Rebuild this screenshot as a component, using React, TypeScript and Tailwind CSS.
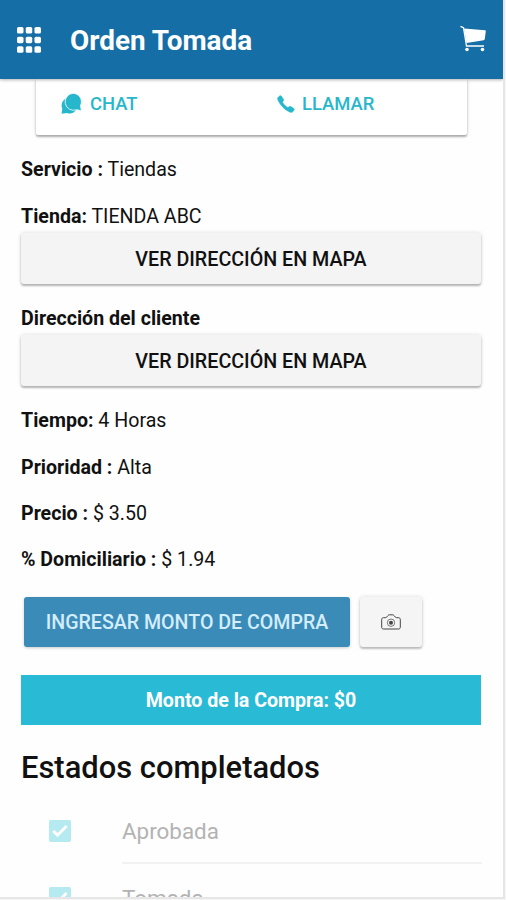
import { IoIosCall } from "react-icons/io";

interface FieldPropTypes {
  label: string;
  value?: string;
  className?: string;
}

function Field({ label, value, className = "" }: FieldPropTypes) {
  return (
    <p className={`h-6 text-[19.6px] leading-[26px] whitespace-nowrap ${className}`}>
      <span className="font-bold">{label}</span>
      {value && <span> {value}</span>}
    </p>
  );
}

function MapButton() {
  return (
    <button className="mt-[5px] h-[51px] w-[460px] shrink-0 rounded-[3px] bg-[#f4f4f4] pt-0.5 text-[19.7px] font-medium shadow-[0_2px_2px_rgba(0,0,0,0.25),0_0_4px_rgba(0,0,0,0.14)]">
      VER DIRECCIÓN EN MAPA
    </button>
  );
}

function GridIcon() {
  const cells = [0, 9, 18];
  return (
    <svg width="24" height="26" viewBox="0 0 24 26" fill="currentColor">
      {cells.map((y) =>
        cells.map((x) => (
          <rect key={`${x}-${y}`} x={x * 0.97} y={y * 1.07} width="6.5" height="6.5" rx="1.6" />
        ))
      )}
    </svg>
  );
}

function CartIcon() {
  return (
    <svg className="mr-[16px] mb-px ml-auto" width="28" height="28" viewBox="0 0 28 28" fill="currentColor">
      <path d="M5 3.5 26 5.2c.6 0 .9.400.8 1l-1 7.900c-.1.700-.5 1.100-1.100 1.200L7.500 18z" />
      <path d="M1.500 1.300 4.500 2.700 7.500 21H25" fill="none" stroke="currentColor" strokeWidth="1.300" />
      <circle cx="8" cy="24.500" r="1.800" />
      <circle cx="23.500" cy="24.500" r="1.800" />
    </svg>
  );
}

function ChatIcon() {
  return (
    <svg width="21" height="21" viewBox="0 0 21 21" fill="currentColor">
      <path d="M8.500 4.500a8 8 0 1 1-2.700 15.500L.6 20.700l.7-4.900A8 8 0 0 1 8.500 4.500z" />
      <path
        d="M12 .3a8.500 8.500 0 0 1 7.500 12.300l.9 5.200-4.700-1.100A8.500 8.500 0 1 1 12 .3z"
        stroke="#fff"
        strokeWidth="0.800"
      />
    </svg>
  );
}

function CameraIcon() {
  return (
    <svg width="20" height="16" viewBox="0 0 20 16" fill="none" stroke="currentColor">
      <path d="M2.400 3.700h1.900c.6 0 1-.2 1.400-.6L7 1.500c.4-.5.800-.7 1.400-.7h3.200c.6 0 1 .2 1.400.7l1.300 1.600c.4.400.8.600 1.400.6h1.900c1 0 1.700.7 1.700 1.700v7.900c0 1-.7 1.700-1.700 1.700H2.400c-1 0-1.700-.7-1.700-1.700V5.400c0-1 .7-1.700 1.700-1.700z" />
      <circle cx="10" cy="8.700" r="3.700" strokeOpacity="0.700" />
      <circle cx="10" cy="8.700" r="2" fill="currentColor" stroke="none" />
    </svg>
  );
}

function StateRow({ name }: { name: string }) {
  return (
    <li className="flex h-[67px] shrink-0 items-center">
      <span className="ml-7 flex size-[22px] items-center justify-center rounded-[2px] bg-[#b5eaf0]">
        <svg width="16" height="14" viewBox="0 0 16 14" fill="none" stroke="#fff" strokeWidth="3">
          <path d="M1.200 7 5.600 11.200 14.600 2" />
        </svg>
      </span>
      <span className="ml-[51px] flex h-full w-[360px] items-center border-b-2 border-[#f2f2f2] pt-1 text-[22.4px] text-[#b3b3b3]">
        {name}
      </span>
    </li>
  );
}

function App() {
  return (
    <div className="h-[900px] w-[506px] overflow-hidden bg-[#f6f6f6] font-[Roboto,sans-serif] text-[#111]">
      <div className="flex h-[899px] w-[505px] flex-col overflow-hidden border-r-2 border-b-2 border-[#e6e6e6] bg-[#fefefe]">
        <header className="z-10 flex h-[79px] shrink-0 items-center bg-[#166ea6] pl-[17px] text-white shadow-[0_1px_3px_rgba(0,0,0,0.3)]">
          <GridIcon />
          <h1 className="ml-[29px] pt-[2px] text-[27.9px] font-bold whitespace-nowrap">Orden Tomada</h1>
          <CartIcon />
        </header>

        <section className="ml-9 flex h-[56px] w-[431px] shrink-0 items-center rounded-b-[2px] bg-white text-[18.4px] font-medium text-[#27b7cc] shadow-[0_2px_2px_rgba(0,0,0,0.28),0_0_4px_rgba(0,0,0,0.15)]">
          <div className="flex w-[239px] items-center gap-2 pb-1.5 pl-[25px]">
            <ChatIcon />
            <span>CHAT</span>
          </div>
          <div className="flex items-center gap-[5px] pb-1.5">
            <IoIosCall className="size-[22px] stroke-current stroke-[16px]" />
            <span>LLAMAR</span>
          </div>
        </section>

        <main className="flex flex-col pt-[22px] pl-[21px]">
          <Field label="Servicio :" value="Tiendas" />
          <Field label="Tienda:" value="TIENDA ABC" className="mt-[23px]" />
          <MapButton />
          <Field label="Dirección del cliente" className="mt-[22px]" />
          <MapButton />
          <Field label="Tiempo:" value="4 Horas" className="mt-[22px]" />
          <Field label="Prioridad :" value="Alta" className="mt-[23px]" />
          <Field label="Precio :" value="$ 3.50" className="mt-[22px]" />
          <Field label="% Domiciliario :" value="$ 1.94" className="mt-[22px]" />

          <div className="mt-[26px] ml-[3px] flex h-[50px] gap-[10px]">
            <button className="w-[326px] rounded-[3px] bg-[#3b8bb9] pt-0.5 text-[19.6px] font-medium text-[#d4edfa] shadow-[0_1px_3px_rgba(0,0,0,0.2)]">
              INGRESAR MONTO DE COMPRA
            </button>
            <button className="flex w-[62px] items-center justify-center rounded-[3px] bg-[#f5f5f5] text-[#444] shadow-[0_2px_2px_rgba(0,0,0,0.22),0_0_4px_rgba(0,0,0,0.14)]">
              <CameraIcon />
            </button>
          </div>

          <div className="mt-7 flex h-[50px] w-[460px] items-center justify-center bg-[#29bad6] pt-0.5 text-[19.6px] font-bold text-white">
            Monto de la Compra: $0
          </div>

          <h2 className="mt-[26px] h-8 text-[30.9px] leading-[34px] font-medium whitespace-nowrap">Estados completados</h2>
          <ul className="mt-[14px] flex flex-col">
            <StateRow name="Aprobada" />
            <StateRow name="Tomada" />
          </ul>
        </main>
      </div>
    </div>
  );
}

export default App;
